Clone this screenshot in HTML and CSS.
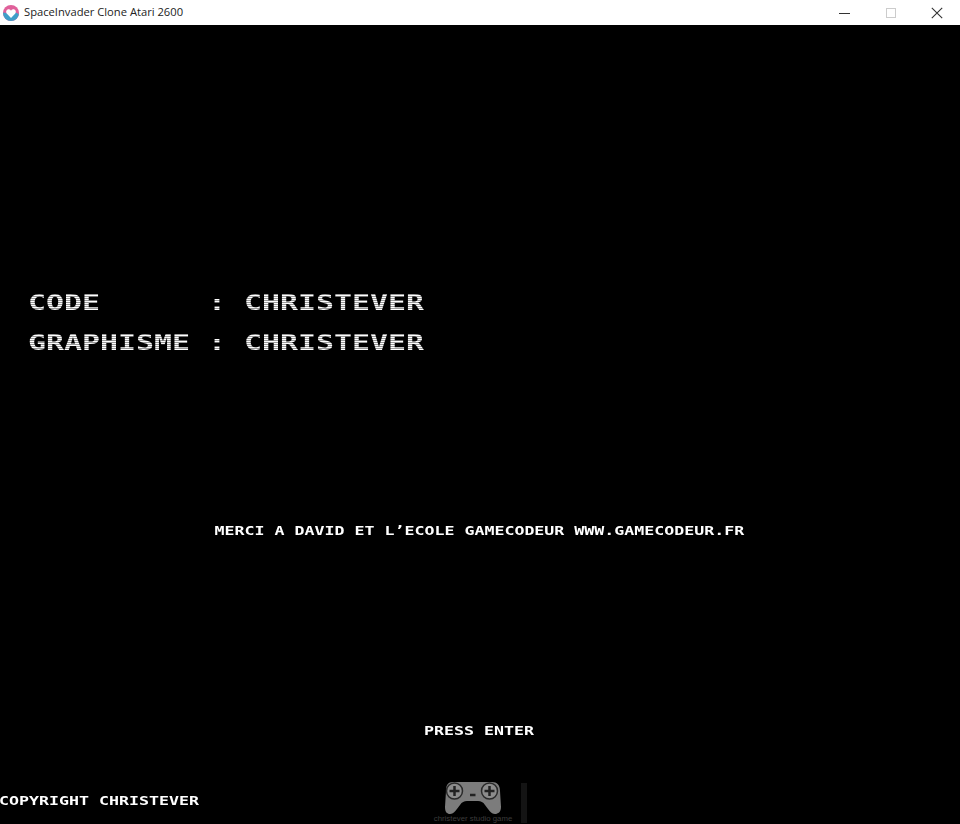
FILE: index.html
```html
<!DOCTYPE html>
<html lang="en">
<head>
  <meta charset="UTF-8">
  <meta name="viewport" content="width=device-width, initial-scale=1.0">
  <title>SpaceInvader Clone Atari 2600</title>
  <link rel="stylesheet" href="styles.css">
</head>
<body>
  <div class="titlebar">
    <svg class="app-icon" width="16" height="16" viewBox="0 0 16 16">
      <circle cx="8" cy="8" r="8" fill="#e0609a"/>
      <path d="M0 8A8 8 0 0 0 16 8C16 11 13 5 8 8 4 10 1 6 0 8Z" fill="#3f9fc9"/>
      <path d="M8 13 3.700 8.500C2.300 6.500 3.800 4 6 4.300 6.900 4.400 7.600 5 8 5.700 8.400 5 9.100 4.400 10 4.300 12.200 4 13.700 6.500 12.300 8.500Z" fill="#fff"/>
    </svg>
    <span class="window-title">SpaceInvader Clone Atari 2600</span>
    <div class="window-buttons">
      <span class="win-btn">
        <svg width="12" height="12" viewBox="0 0 12 12"><path d="M0 6.500H11" stroke="#333" stroke-width="1"/></svg>
      </span>
      <span class="win-btn">
        <svg width="12" height="12" viewBox="0 0 12 12"><rect x="1.500" y="1.500" width="9" height="9" fill="none" stroke="#ccc"/></svg>
      </span>
      <span class="win-btn">
        <svg width="12" height="12" viewBox="0 0 12 12"><path d="M.8.8 11.200 11.200M11.200.8.8 11.200" stroke="#333" stroke-width="1.100"/></svg>
      </span>
    </div>
  </div>

  <div class="screen">
    <div class="credits">
      <div class="credit-line">CODE      : CHRISTEVER</div>
      <div class="credit-line">GRAPHISME : CHRISTEVER</div>
    </div>
    <div class="small-line thanks">MERCI A DAVID ET L’ECOLE GAMECODEUR WWW.GAMECODEUR.FR</div>
    <div class="small-line press">PRESS ENTER</div>
    <div class="footer">
      <div class="small-line copyright">COPYRIGHT CHRISTEVER</div>
      <div class="studio">
        <div class="studio-logo">
          <svg class="pad" width="56" height="34" viewBox="0 0 56 34">
            <path d="M8 1H47C52 1 55 4 55 10L56 26C56 31 53 33 50 33 46 33 43 28 40 24 38 21 36 20 33 20H22C19 20 17 21 15 24 12 28 9 33 5 33 2 33 0 31 0 26L1 10C1 4 3 1 8 1Z" fill="#7c7c7c"/>
            <circle cx="9.500" cy="10" r="8" fill="#8c8c8c" stroke="#2a2a2a" stroke-width="1.500"/>
            <circle cx="44.500" cy="10" r="8" fill="#8c8c8c" stroke="#2a2a2a" stroke-width="1.500"/>
            <path d="M9.500 5V15M4.500 10H14.500M44.500 5V15M39.500 10H49.500M25 14H30.500" stroke="#222" stroke-width="2.500"/>
          </svg>
          <span class="studio-name">christever studio game</span>
        </div>
        <span class="studio-line"></span>
      </div>
    </div>
  </div>
</body>
</html>
```

FILE: styles.css
```css
html, body {
  margin: 0;
  height: 100%;
  background-color: #000;
}
body {
  display: flex;
  flex-direction: column;
  overflow: hidden;
}

/* window chrome */
.titlebar {
  display: flex;
  align-items: center;
  flex: 0 0 25px;
  padding-left: 3px;
  background-color: #fff;
}
.app-icon {
  margin-right: 5px;
}
.window-title {
  font: 11.200px "Open Sans", "Noto Sans", sans-serif;
  color: #222;
  margin-top: -2px;
}
.window-buttons {
  display: flex;
  margin-left: auto;
}
.win-btn {
  display: flex;
  align-items: center;
  justify-content: center;
  width: 46px;
  height: 25px;
}

/* game surface */
.screen {
  flex: 1;
  display: flex;
  flex-direction: column;
  min-height: 0;
  padding-top: 258px;
  font-family: "DejaVu Sans Mono", "Liberation Mono", monospace;
  font-weight: bold;
  color: #fff;
}
.credit-line {
  width: max-content;
  margin-left: 28px;
  font-size: 21px;
  line-height: 40px;
  white-space: pre;
  color: transparent;
  background: repeating-linear-gradient(#fff 0 1px, #999 1px 2px);
  -webkit-background-clip: text;
  background-clip: text;
  transform: scaleX(1.424);
  transform-origin: left;
}
.small-line {
  width: max-content;
  align-self: center;
  font-size: 13px;
  line-height: 20px;
  white-space: pre;
  transform: scaleX(1.277);
}
.thanks {
  margin-top: 158px;
  margin-right: 2px;
}
.press {
  margin-top: 180px;
  margin-right: 2px;
}
.footer {
  display: grid;
  grid-template-columns: 1fr auto 1fr;
  margin-top: 40px;
  align-self: stretch;
}
.copyright {
  align-self: start;
  justify-self: start;
  margin-left: -1px;
  line-height: 40px;
  transform-origin: left;
}
.studio {
  display: flex;
  gap: 8px;
}
.studio-logo {
  display: flex;
  flex-direction: column;
  align-items: center;
  width: 80px;
}
.pad {
  display: block;
  margin-left: -1px;
}
.studio-name {
  font: 7.800px/8px "Liberation Sans", sans-serif;
  white-space: nowrap;
  color: #3c3c3c;
}
.studio-line {
  width: 6px;
  height: 40px;
  margin-top: 2px;
  background-color: #141414;
}
```
